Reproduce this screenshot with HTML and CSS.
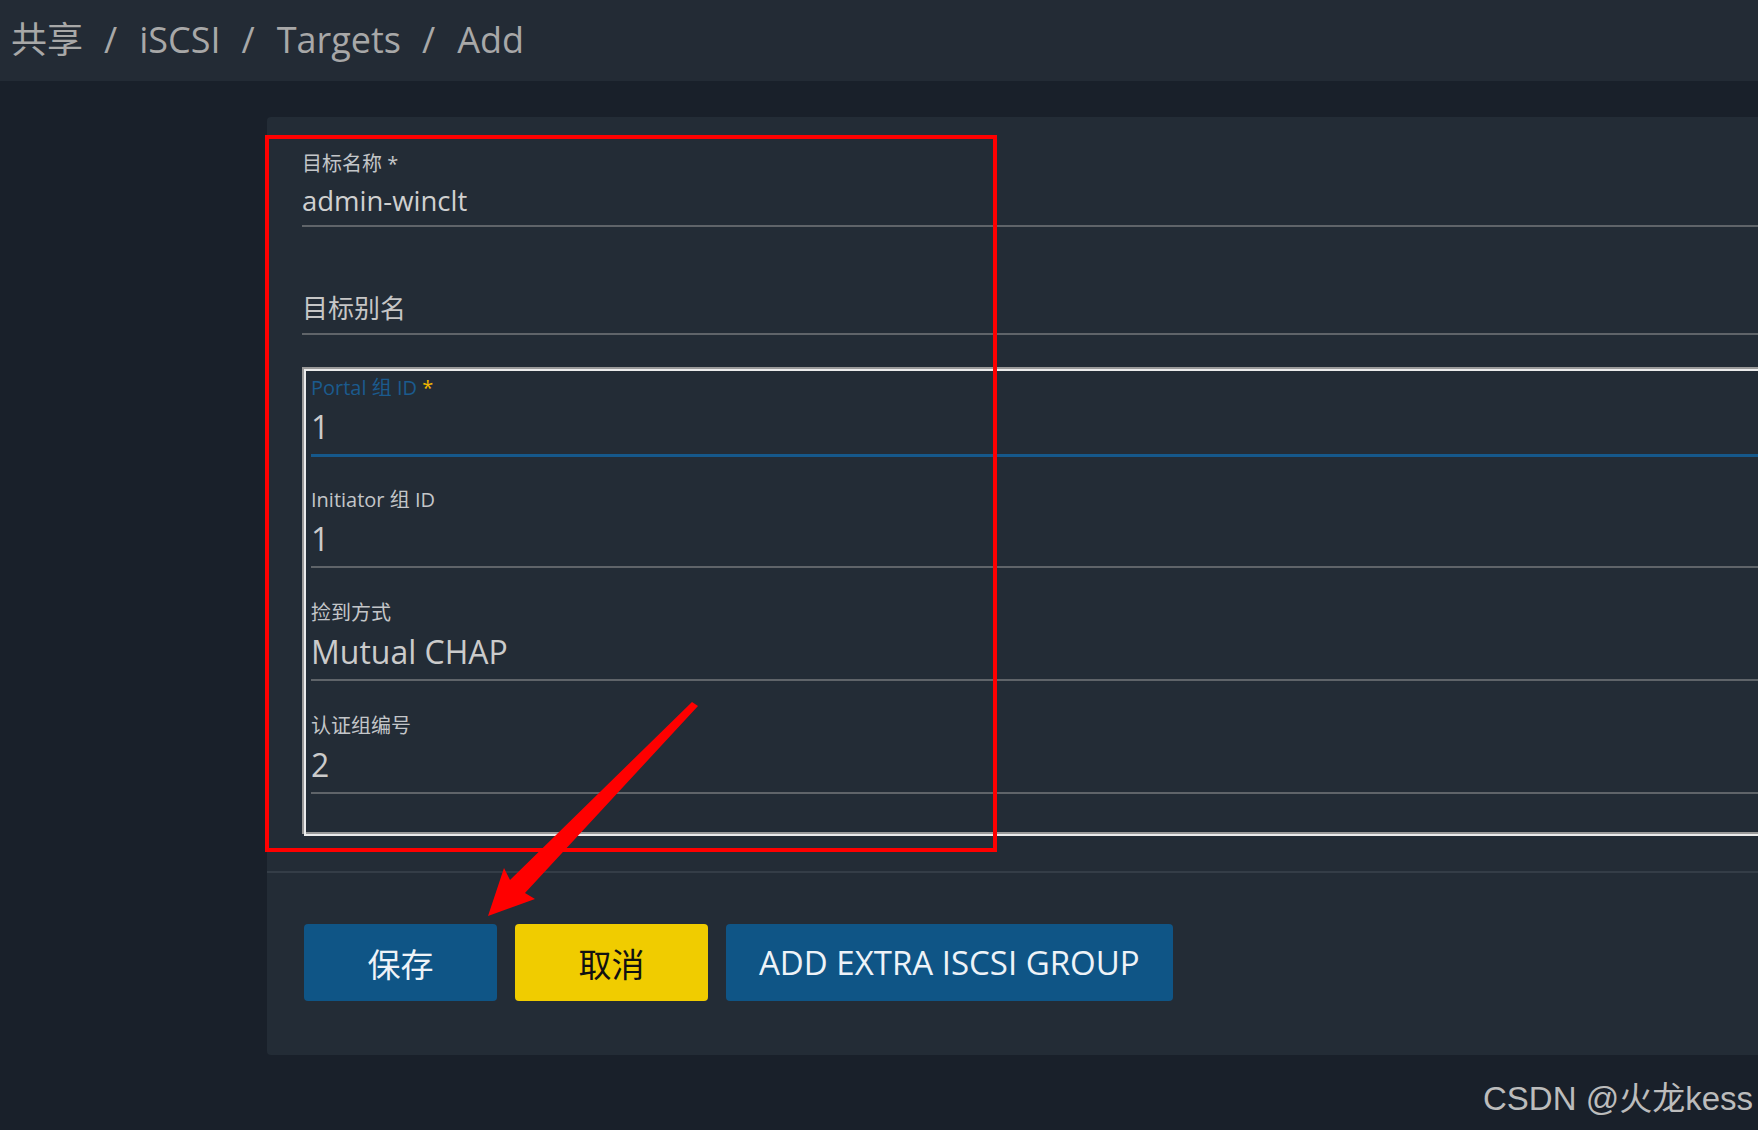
FILE: index.html
```html
<!DOCTYPE html>
<html lang="zh-CN">
<head>
<meta charset="utf-8">
<title>iSCSI Targets Add</title>
<link rel="stylesheet" href="styles.css">
</head>
<body>
<header class="topbar">
  <nav class="crumbs">
    <span class="crumb">共享</span><span class="sep">/</span>
    <span class="crumb">iSCSI</span><span class="sep">/</span>
    <span class="crumb">Targets</span><span class="sep">/</span>
    <span class="crumb">Add</span>
  </nav>
</header>
<div class="layout">
  <aside class="side"></aside>
  <main class="main">
    <section class="card">
      <div class="form-body">
        <div class="field">
          <div class="label">目标名称 *</div>
          <div class="value">admin-winclt</div>
        </div>
        <div class="field field-gap">
          <div class="label"></div>
          <div class="value placeholder">目标别名</div>
        </div>
        <div class="group">
          <div class="field focused">
            <div class="label"><span class="blue">Portal 组 ID</span> <span class="req">*</span></div>
            <div class="value">1</div>
          </div>
          <div class="field after-focus">
            <div class="label">Initiator 组 ID</div>
            <div class="value">1</div>
          </div>
          <div class="field field-gap">
            <div class="label">捡到方式</div>
            <div class="value">Mutual CHAP</div>
          </div>
          <div class="field field-gap">
            <div class="label">认证组编号</div>
            <div class="value">2</div>
          </div>
        </div>
      </div>
      <div class="actions">
        <button class="btn btn-blue">保存</button>
        <button class="btn btn-yellow">取消</button>
        <button class="btn btn-blue">ADD EXTRA ISCSI GROUP</button>
      </div>
    </section>
  </main>
</div>
<svg class="annot" width="1758" height="1130" viewBox="0 0 1758 1130">
  <rect x="267" y="137" width="728" height="713" fill="none" stroke="#ff0000" stroke-width="4"/>
  <polygon points="692,702 698,706 525,893 535,899 488,916 504,868 510,880" fill="#ff0000"/>
</svg>
<div class="watermark">CSDN @火龙kess</div>
</body>
</html>
```

FILE: styles.css
```css
html, body {
  margin: 0;
  padding: 0;
  height: 100%;
}

body {
  background: #19202a;
  font-family: "Open Sans", "Noto Sans CJK SC", sans-serif;
  overflow: hidden;
  position: relative;
}

.topbar {
  height: 81px;
  box-sizing: border-box;
  padding: 0 0 7px 11px;
  background: #232b35;
  display: flex;
  align-items: center;
}

.crumbs {
  display: flex;
  align-items: baseline;
  font-size: 36px;
  color: #a8a8a8;
}

.sep {
  margin: 0 22px 0 21px;
}

.layout {
  display: flex;
}

.side {
  flex: none;
  width: 267px;
}

.main {
  flex: 1;
  min-width: 0;
  padding-top: 36px;
}

.card {
  background: #232c36;
  border-radius: 4px 0 0 4px;
  margin-right: -40px;
}

.form-body {
  padding: 35px 0 35px 35px;
}

.field {
  border-bottom: 2px solid #5f6469;
}

.label {
  height: 24px;
  font-size: 20px;
  line-height: 24px;
  color: #c3c6c9;
  white-space: nowrap;
}

.value {
  font-size: 27.5px;
  line-height: 49px;
  height: 49px;
  color: #d0d0d0;
  white-space: nowrap;
}

.placeholder {
  font-size: 26px;
  color: #c6c6c6;
}

.field-gap {
  margin-top: 33px;
}

.group {
  margin-top: 34px;
  margin-left: 2px;
  border: 2px solid #ececec;
  border-right: none;
  box-shadow: -2px -2px 0 0 #9a9a9a, inset 0 -2px 0 0 #9a9a9a;
  padding: 5px 0 40px 5px;
}

.group .value {
  font-size: 32px;
  line-height: 54px;
  height: 54px;
  color: #cbcbcb;
}

.group .field.focused {
  border-bottom: 3px solid #15588b;
}

.after-focus {
  margin-top: 31px;
}

.blue {
  color: #1b5b8e;
}

.req {
  color: #f2b600;
}

.actions {
  border-top: 2px solid #343d47;
  padding: 51px 0 54px 37px;
  display: flex;
  gap: 18px;
}

.btn {
  height: 77px;
  min-width: 193px;
  padding: 0 33px;
  border: none;
  border-radius: 4px;
  font-family: "Open Sans", "Noto Sans CJK SC", sans-serif;
  font-size: 33px;
  cursor: pointer;
}

.btn-blue {
  background: #0f5586;
  color: #eef3f8;
}

.btn-yellow {
  background: #f0cc00;
  color: #111111;
}

.annot {
  position: absolute;
  left: 0;
  top: 0;
  pointer-events: none;
}

.watermark {
  position: absolute;
  right: 5px;
  top: 1082px;
  font-family: "Liberation Sans", "Noto Sans CJK SC", sans-serif;
  font-size: 33px;
  line-height: 1;
  color: #bcbcbc;
  white-space: nowrap;
}
```
